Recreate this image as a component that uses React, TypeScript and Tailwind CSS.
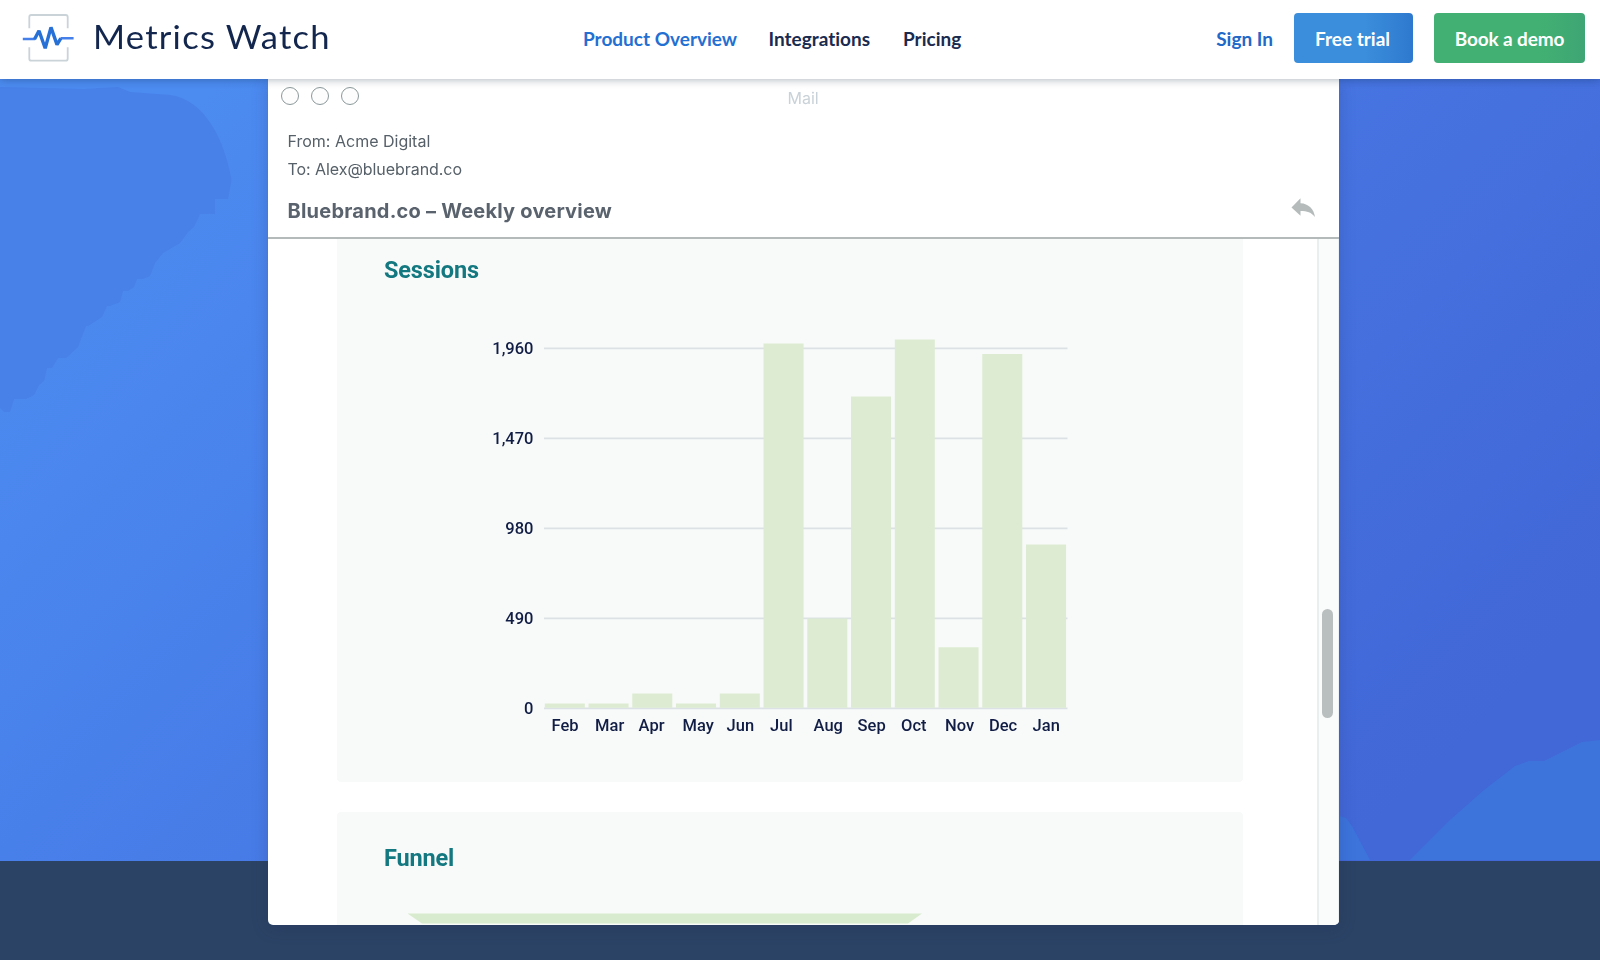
const bars = [
  { label: 'Feb', x: 552, top: 703.5 },
  { label: 'Mar', x: 595.5, top: 703.5 },
  { label: 'Apr', x: 639, top: 693.5 },
  { label: 'May', x: 683, top: 703.5 },
  { label: 'Jun', x: 727, top: 693.5 },
  { label: 'Jul', x: 770.5, top: 343.5 },
  { label: 'Aug', x: 814, top: 618.5 },
  { label: 'Sep', x: 858, top: 396.5 },
  { label: 'Oct', x: 901.5, top: 339.5 },
  { label: 'Nov', x: 945.5, top: 647.3 },
  { label: 'Dec', x: 989.3, top: 354 },
  { label: 'Jan', x: 1033, top: 544.5 },
];

const ticks = [
  { label: '1,960', y: 348 },
  { label: '1,470', y: 438 },
  { label: '980', y: 528 },
  { label: '490', y: 618 },
  { label: '0', y: 708 },
];

function Logo() {
  return (
    <div className="flex items-center">
      <svg className="h-[52px] w-[54px]" viewBox="21 12 54 52" fill="none">
        <path d="M29.3 28.3V17a2 2 0 0 1 2-2h34.4a2 2 0 0 1 2 2v11.3M29.3 47.3v11.4a2 2 0 0 0 2 2h34.4a2 2 0 0 0 2-2V47.3" stroke="#c9d3d8" strokeWidth="1.8" />
        <path d="M22.800 39h12.400M60.500 38.300H73.600" stroke="#4580ea" strokeWidth="2.4" />
        <path d="M34.500 39.200 39 30.800 45.200 48.200 51 27.400 57 44.600 60.800 38.400" stroke="#2670d6" strokeWidth="3.4" strokeLinejoin="bevel" />
      </svg>
      <span className="ml-[17.500px] origin-left scale-x-[1.08] whitespace-nowrap pb-[3px] font-['Lato',sans-serif] text-[32px] leading-[40px] font-normal tracking-[1.15px] text-[#12264e]">
        Metrics Watch
      </span>
    </div>
  );
}

function Header() {
  return (
    <header className="relative z-10 flex h-[79px] items-center bg-white pr-[15px] pl-[21px] pb-[3px] font-['Lato',sans-serif] text-[19px] font-bold text-[#1a2b50] shadow-[0_1px_8px_rgba(0,30,50,0.3)] [font-variant-ligatures:none]">
      <div className="w-[562px] shrink-0">
        <Logo />
      </div>
      <nav className="flex items-center gap-8 whitespace-nowrap pt-[2px]">
        <a className="w-[153.500px] text-[#246fd2]">Product Overview</a>
        <a className="w-[102.500px]">Integrations</a>
        <a>Pricing</a>
      </nav>
      <div className="ml-auto flex items-center whitespace-nowrap">
        <a className="mr-[21px] pt-[2px] text-[#2168c8]">Sign In</a>
        <button className="mr-[21px] h-[50px] w-[119px] rounded-[4px] bg-linear-to-r from-[#3b8edb] from-60% to-[#2e79cf] pt-[2px] pr-[2px] text-white">Free trial</button>
        <button className="h-[50px] w-[151px] rounded-[4px] bg-linear-to-r from-[#42b072] from-70% to-[#3ea574] pt-[2px] tracking-[-0.15px] text-white">Book a demo</button>
      </div>
    </header>
  );
}

function Backdrop() {
  return (
    <svg className="absolute inset-0 h-full w-full" viewBox="0 79 1600 881" preserveAspectRatio="none">
      <defs>
        <linearGradient id="sky" gradientUnits="userSpaceOnUse" x1="150" y1="150" x2="1105" y2="1105">
          <stop offset="0" stopColor="#4c8bf0" />
          <stop offset="0.29" stopColor="#4880ea" />
          <stop offset="0.59" stopColor="#4674e1" />
          <stop offset="1" stopColor="#4267d7" />
        </linearGradient>
      </defs>
      <rect x="0" y="79" width="1600" height="782" fill="url(#sky)" />
      <path d="M0 87 84 89 118 87 130 92 170 95C206 100 225 142 231.500 180L228 199H215V214H200L194 227 188 232 180 243 163 253 155 263 150 276 143 279H137L134 287 128 291H123L120 302 110 306H107L102 317 88 326H86L81 339 78 347 66 358H58L52 368H47L44 381 39 385 34 395 26 399H14L10 412H4L0 408Z" fill="#4881e8" />
      <path d="M1340 816 1346 818 1352 826 1370 860H1340ZM1410 860 1450 820 1484 790 1515 766 1529 761H1544L1582 742 1600 740V860Z" fill="#3c74dc" />
      <rect x="0" y="861" width="1600" height="99" fill="#2b4365" />
    </svg>
  );
}

function MailHeader() {
  return (
    <div className="h-[160px] shrink-0 border-b-2 border-[#b4baba] pt-[7px] pl-[13px] font-['Inter',sans-serif] text-[#566068]">
      <div className="flex h-[20px] items-center gap-3">
        <i className="h-[18px] w-[18px] rounded-full border border-[#8b9899] bg-[#fdfdfd]" />
        <i className="h-[18px] w-[18px] rounded-full border border-[#8b9899] bg-[#fdfdfd]" />
        <i className="h-[18px] w-[18px] rounded-full border border-[#8b9899] bg-[#fdfdfd]" />
        <span className="ml-[416.500px] pt-[3px] text-[16px] leading-[20px] text-[#c9d2d8]">Mail</span>
      </div>
      <div className="flex flex-col pt-[22px] pl-[6.500px] text-[16px] leading-[27.500px]">
        <span>From: Acme Digital</span>
        <span className="tracking-[-0.06px]">To: Alex@bluebrand.co</span>
      </div>
      <div className="flex items-start justify-between pt-[14px] pr-[23px] pl-[6.500px]">
        <span className="text-[20px] leading-[28px] font-bold tracking-[0.22px] text-[#5a636d]">Bluebrand.co – Weekly overview</span>
        <svg className="h-[20px] w-[25px]" viewBox="1291 197 25 20">
          <path d="M1291.500 207.500 1300.500 198.300V203.200C1308.500 203.500 1314 209 1315 217C1311.500 212.500 1307 211 1300.500 211V215.800Z" fill="#b5bbbb" />
        </svg>
      </div>
    </div>
  );
}

function SessionsChart() {
  return (
    <svg className="ml-[143px] h-[430px] w-[620px]" viewBox="480 320 620 430" fontFamily="Roboto, sans-serif" fontSize="16.5" fontWeight="500" fill="#111d45">
      {ticks.map((t) => (
        <g key={t.label}>
          <line x1="544" x2="1067.500" y1={t.y + 0.3} y2={t.y + 0.3} stroke="#dbe1e5" strokeWidth="1.8" />
          <text x="533.500" y={t.y + 6.2} textAnchor="end">{t.label}</text>
        </g>
      ))}
      {bars.map((b, i) => (
        <g key={b.label}>
          <rect x={544.8 + i * 43.75} y={b.top} width="40" height={707.8 - b.top} fill="#dcebd1" />
          <text x={b.x - 0.4} y="731">{b.label}</text>
        </g>
      ))}
    </svg>
  );
}

function MailWindow() {
  return (
    <section className="relative ml-[268px] flex h-[846px] w-[1070.500px] flex-col overflow-hidden rounded-b-[5px] bg-white">
      <MailHeader />
      <div className="flex min-h-0 flex-1">
        <div className="ml-[68.500px] flex w-[906px] shrink-0 flex-col font-['Roboto',sans-serif] text-[23.500px] leading-[28px] font-bold text-[#137880]">
          <div className="h-[543px] shrink-0 rounded-b-[4px] bg-[#f8faf9]">
            <h2 className="pt-[17px] pl-[47.500px] tracking-[-0.15px]">Sessions</h2>
            <div className="pt-[36px]">
              <SessionsChart />
            </div>
          </div>
          <div className="mt-[30px] flex-1 rounded-t-[4px] bg-[#f8faf9]">
            <h2 className="pt-[32px] pl-[47.500px] tracking-[-0.15px]">Funnel</h2>
            <svg className="mt-[41px] ml-[70px] h-[11px] w-[516px]" viewBox="407 913 516 11">
              <path d="M407.500 913.500H922L908 923.500H422Z" fill="#d8ebce" />
            </svg>
          </div>
        </div>
        <div className="ml-auto w-[21.500px] border-r border-l-2 border-r-[#edf1f1] border-l-[#e9eeef] bg-[#fafbfb] pt-[370px] pl-[3px]">
          <div className="h-[109px] w-[11px] rounded-full bg-[#b9bfbf]" />
        </div>
      </div>
    </section>
  );
}

export default function App() {
  return (
    <div className="h-[960px] w-[1600px] overflow-hidden bg-[#2b4365]">
      <Header />
      <main className="relative h-[881px]">
        <Backdrop />
        <div className="relative flex drop-shadow-[0_3px_8px_rgba(30,30,80,0.22)]">
          <MailWindow />
        </div>
      </main>
    </div>
  );
}
